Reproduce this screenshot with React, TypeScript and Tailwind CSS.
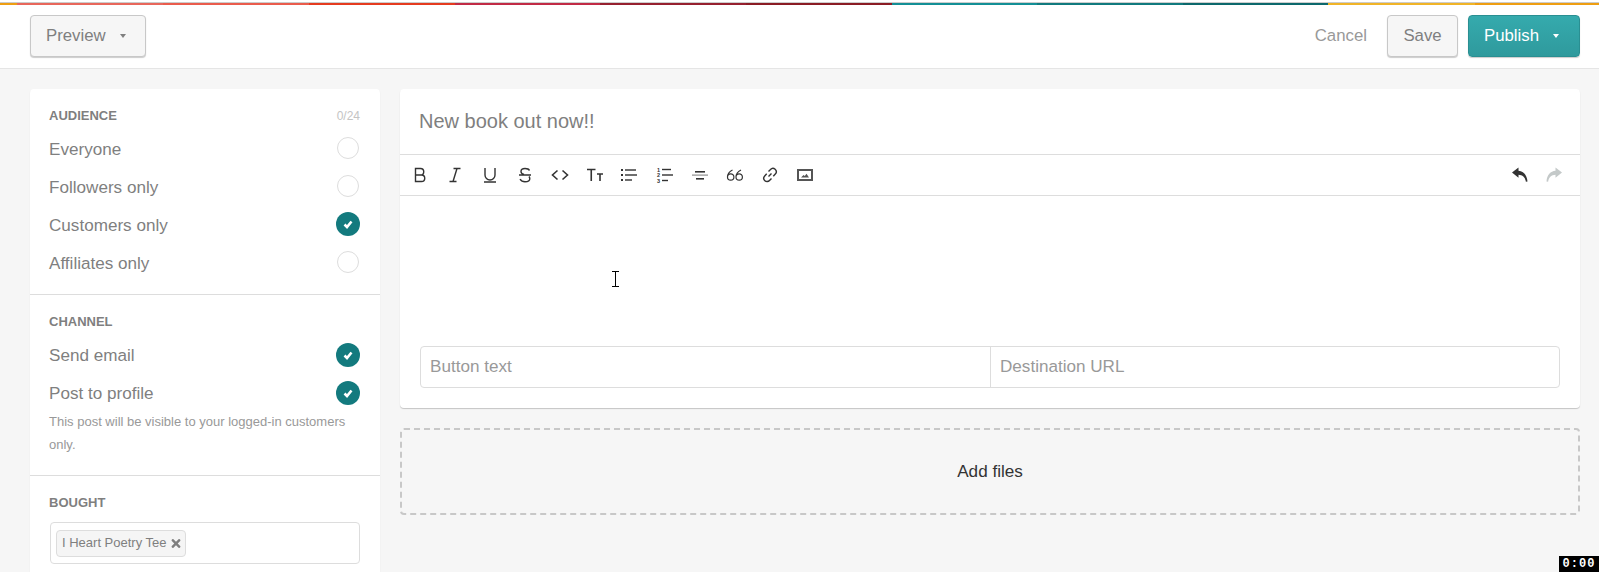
import { FaTimes } from "react-icons/fa";

const stripes = [
  { w: "w-[17px]", c: "bg-[#ee9e12]" },
  { w: "w-[146px]", c: "bg-[#e8675b]" },
  { w: "w-[146px]", c: "bg-[#ea5c4c]" },
  { w: "w-[146px]", c: "bg-[#e53b1f]" },
  { w: "w-[145px]", c: "bg-[#c12a45]" },
  { w: "w-[146px]", c: "bg-[#96202f]" },
  { w: "w-[146px]", c: "bg-[#8a1c24]" },
  { w: "w-[145px]", c: "bg-[#138f96]" },
  { w: "w-[146px]", c: "bg-[#107a7e]" },
  { w: "w-[145px]", c: "bg-[#0c686c]" },
  { w: "w-[147px]", c: "bg-[#f0b428]" },
  { w: "flex-1", c: "bg-[#ee9e12]" },
];

const Toggle = ({ on }: { on?: boolean }) =>
  on ? (
    <span className="flex items-center justify-center w-6 h-6 rounded-full bg-[#137a7e]">
      <svg className="w-[10px] h-[10px] text-white" viewBox="0 0 10 10" fill="none" stroke="currentColor" strokeWidth="2.6">
        <path d="M1.500 5.500 4 8 8.500 2.500" />
      </svg>
    </span>
  ) : (
    <span className="mr-px w-[22px] h-[22px] rounded-full border border-[#dddddd] bg-white" />
  );

const Row = ({ label, on, textClass }: { label: string; on?: boolean; textClass: string }) => (
  <div className="flex items-center justify-between h-[38px] text-[17.1px] text-[#7f7f7f]">
    <span className={textClass}>{label}</span>
    <Toggle on={on} />
  </div>
);

const Caret = ({ className }: { className: string }) => (
  <span className={`ml-[14px] w-0 h-0 border-x-[3px] border-t-[4px] border-x-transparent ${className}`} />
);

const toolIcon = "w-[18px] h-[18px] text-[#333333]";

const ToolbarIcons = () => (
  <div className="flex items-center gap-[17px] text-[#333333]">
    {/* bold */}
    <svg className={toolIcon} viewBox="0 0 18 18" fill="none" stroke="currentColor" strokeWidth="1.4">
      <path d="M4.5 2.5h5a3 3 0 0 1 0 6.5h-5zM4.5 9h6a3.2 3.2 0 0 1 0 6.5h-6z" />
    </svg>
    {/* italic */}
    <svg className={toolIcon} viewBox="0 0 18 18" fill="none" stroke="currentColor" strokeWidth="1.4">
      <path d="M7.5 2.5h7M3.5 15.5h7M11 2.5 7 15.5" />
    </svg>
    {/* underline */}
    <svg className={toolIcon} viewBox="0 0 18 18" fill="none" stroke="currentColor" strokeWidth="1.4">
      <path d="M4 2v7a5 5 0 0 0 10 0V2M3 16h12" />
    </svg>
    {/* strike */}
    <svg className={toolIcon} viewBox="0 0 18 18" fill="none" stroke="currentColor" strokeWidth="1.4">
      <path d="M13.500 4.500C12.800 3 11 2.500 9 2.500 6.800 2.500 5 3.500 5 5.500c0 1.500 1.200 2.500 3 3M13 10.500c.5.700.8 1.400.8 2.200 0 2-2.300 3-4.800 3-2.300 0-4-1-5-2.600M3 9h12" />
    </svg>
    {/* code */}
    <svg className={toolIcon} viewBox="0 0 18 18" fill="none" stroke="currentColor" strokeWidth="1.6">
      <path d="M6.500 4.500 1.500 9l5 4.500M11.500 4.500l5 4.500-5 4.500" />
    </svg>
    {/* text size */}
    <svg className={toolIcon} viewBox="0 0 18 18" fill="none" stroke="currentColor" strokeWidth="1.6">
      <path d="M1 3.500h8.500M5.250 3.500v11.500M11 8h6M14 8v7" />
    </svg>
    {/* bullets */}
    <svg className={toolIcon} viewBox="0 0 18 18" fill="currentColor">
      <rect x="0" y="3" width="2" height="2" />
      <rect x="0" y="8" width="2" height="2" />
      <rect x="0" y="13" width="2" height="2" />
      <rect x="4" y="3.300" width="11" height="1.400" />
      <rect x="4" y="8.300" width="12" height="1.400" />
      <rect x="4" y="13.300" width="7" height="1.400" />
    </svg>
    {/* numbers */}
    <svg className={toolIcon} viewBox="0 0 18 18" fill="currentColor">
      <text x="1" y="5.500" fontSize="5.500" fontWeight="700" fontFamily="Liberation Sans">1</text>
      <text x="1" y="11" fontSize="5.500" fontWeight="700" fontFamily="Liberation Sans">2</text>
      <text x="1" y="16.500" fontSize="5.500" fontWeight="700" fontFamily="Liberation Sans">3</text>
      <rect x="6" y="2.800" width="9" height="1.400" />
      <rect x="6" y="8.300" width="11" height="1.400" />
      <rect x="6" y="13.800" width="6" height="1.400" />
    </svg>
    {/* rule */}
    <svg className={toolIcon} viewBox="0 0 18 18" fill="currentColor">
      <rect x="4" y="5" width="10" height="1.600" />
      <rect x="1" y="8.500" width="16" height="1.200" opacity="0.55" />
      <rect x="5" y="12" width="8" height="1.600" />
    </svg>
    {/* quote */}
    <svg className={toolIcon} viewBox="0 0 18 18" fill="none" stroke="currentColor" strokeWidth="1.200">
      <path d="M6.500 4C3.500 5.500 1.500 8.500 1.500 11a3.200 3.200 0 1 0 6.400 0 3.200 3.200 0 0 0-6.400 0M15 4c-3 1.500-5 4.500-5 7a3.200 3.200 0 1 0 6.400 0 3.200 3.200 0 0 0-6.400 0" />
    </svg>
    {/* link */}
    <svg className={toolIcon} viewBox="0 0 18 18" fill="none" stroke="currentColor" strokeWidth="1.400">
      <path d="m7.500 10.500 3-3M7.500 5.500l2-2a3.200 3.200 0 0 1 4.800 4.500l-2 2.200M10.500 12.500l-2 2a3.200 3.200 0 0 1-4.800-4.500l2-2.200" />
    </svg>
    {/* image */}
    <svg className="w-[18px] h-[18px] text-[#555555]" viewBox="0 0 18 18" fill="currentColor">
      <path fillRule="evenodd" d="M1 3h16v12H1zM3 5v8h12V5z" />
      <path d="m5 11.500 2.500-2.500 1.300 1 1.700-2.300 2.500 3.800z" />
    </svg>
  </div>
);

const App = () => {
  return (
    <div className="relative h-[572px] overflow-hidden bg-[#f6f6f6] font-['Liberation_Sans',Arial,sans-serif]">
      {/* Header */}
      <header className="h-[69px] bg-white border-b border-[#e5e5e5]">
        <div className="h-[2px] bg-white" />
        <div className="flex h-[3px] border-t border-[#cccccc]">
          {stripes.map((s, i) => (
            <div key={i} className={`${s.w} ${s.c}`} />
          ))}
        </div>
        <div className="flex items-center justify-between pl-[30px] pr-[19px] pt-[10px]">
          <button className="flex items-center h-[42px] w-[116px] pl-[15px] rounded border border-[#c8c8c8] bg-[#f6f6f6] shadow-[0_1px_1px_rgba(0,0,0,0.2)] text-[16.8px] text-[#7f7f7f]">
            Preview
            <Caret className="border-t-[#7f7f7f]" />
          </button>
          <div className="flex items-center">
            <span className="text-[16.8px] text-[#999999] mr-5">Cancel</span>
            <button className="h-[42px] w-[71px] mr-[10px] rounded border border-[#c8c8c8] bg-[#f6f6f6] shadow-[0_1px_1px_rgba(0,0,0,0.2)] text-[16.8px] text-[#7f7f7f]">
              Save
            </button>
            <button className="flex items-center h-[42px] w-[112px] pl-[15px] rounded border border-[#2a8f92] bg-linear-to-b from-[#35aaad] to-[#2f9a9d] shadow-[0_1px_1px_rgba(0,0,0,0.2)] text-[16.8px] text-white">
              Publish
              <Caret className="border-t-white" />
            </button>
          </div>
        </div>
      </header>

      <main className="flex items-start gap-5 pl-[30px] pr-[19px] pt-5">
        {/* Left column */}
        <aside className="w-[350px] shrink-0 bg-white rounded shadow-[0_1px_1px_rgba(0,0,0,0.15)]">
          <section className="pl-[19px] pr-5 pt-5 pb-[13px] border-b border-[#dddddd]">
            <div className="flex items-center justify-between h-[14px] mb-[6px]">
              <h3 className="text-[13px] font-bold text-[#7f7f7f]">AUDIENCE</h3>
              <span className="text-[12px] text-[#c4c4c4]">0/24</span>
            </div>
            <Row label="Everyone" textClass="pt-1" />
            <Row label="Followers only" textClass="pt-1" />
            <Row label="Customers only" on textClass="pt-1" />
            <Row label="Affiliates only" textClass="pt-1" />
          </section>
          <section className="pl-[19px] pr-5 pt-[19px] pb-[19px] border-b border-[#dddddd]">
            <h3 className="h-[14px] mb-2 leading-[16px] text-[13px] font-bold text-[#7f7f7f]">CHANNEL</h3>
            <Row label="Send email" on textClass="pt-[1px]" />
            <Row label="Post to profile" on textClass="pt-[1px]" />
            <p className="-mt-[2px] text-[13px] leading-[23px] text-[#999999]">
              This post will be visible to your logged-in customers only.
            </p>
          </section>
          <section className="pl-[19px] pr-5 pt-[19px] pb-[19px]">
            <h3 className="h-[14px] mb-[13px] leading-[16px] text-[13px] font-bold text-[#7f7f7f]">BOUGHT</h3>
            <div className="flex items-center h-[42px] ml-px px-[5px] rounded border border-[#dddddd]">
              <span className="flex items-center gap-1 h-[27px] pl-[5px] pr-[4px] rounded-sm border border-[#dddddd] bg-[#f5f5f5] text-[13px] text-[#7f7f7f]">
                I Heart Poetry Tee
                <FaTimes className="w-[10px] h-[13px]" />
              </span>
            </div>
          </section>
        </aside>

        {/* Editor column */}
        <div className="flex-1 flex flex-col gap-5">
          <div className="bg-white rounded shadow-[0_1px_1px_rgba(0,0,0,0.2)]">
            <div className="flex items-center h-[66px] px-[19px] pb-[2px] border-b border-[#dddddd] text-[20px] text-[#7f7f7f]">
              New book out now!!
            </div>
            <div className="flex items-center justify-between h-[41px] pl-[11px] pr-[17px] border-b border-[#dddddd]">
              <ToolbarIcons />
              <div className="flex items-center gap-[16px]">
                <svg className="w-[18px] h-[18px] text-[#333333]" viewBox="0 0 18 18" fill="currentColor">
                  <path d="M1 6.500 7.500 1.500v3.300c5 .5 8.500 4 9 10.700l-1.600.2C14 11 11.500 9 7.500 8.800v3z" />
                </svg>
                <svg className="w-[18px] h-[18px] text-[#c4c9c9]" viewBox="0 0 18 18" fill="currentColor">
                  <path d="M17 6.500 10.500 1.500v3.300c-5 .5-8.500 4-9 10.700l1.600.2C4 11 6.500 9 10.500 8.800v3z" />
                </svg>
              </div>
            </div>
            <div className="h-[150px]" />
            <div className="flex h-[42px] mx-5 mb-5 rounded border border-[#dddddd] text-[17.1px] text-[#999999]">
              <div className="flex items-center w-[570px] pl-[9px] border-r border-[#dddddd]">Button text</div>
              <div className="flex items-center flex-1 pl-[9px]">Destination URL</div>
            </div>
          </div>
          <div className="flex items-center justify-center h-[87px] rounded border-2 border-dashed border-[#c8c8c8] text-[17.1px] text-[#333333]">
            Add files
          </div>
        </div>
      </main>

      {/* mouse cursor, caught in the capture */}
      <svg className="absolute left-[612px] top-[271px] w-[7px] h-[16px] text-black" viewBox="0 0 7 16" fill="none" stroke="currentColor">
        <path d="M0 .5h7M0 15.500h7M3.500 .5v15" />
      </svg>

      {/* recording timer */}
      <div className="absolute right-0 bottom-0 flex items-center justify-center w-10 h-4 bg-black text-white font-['Liberation_Mono',monospace] font-bold text-[12px] tracking-[1px]">
        0:00
      </div>
    </div>
  );
};

export default App;
